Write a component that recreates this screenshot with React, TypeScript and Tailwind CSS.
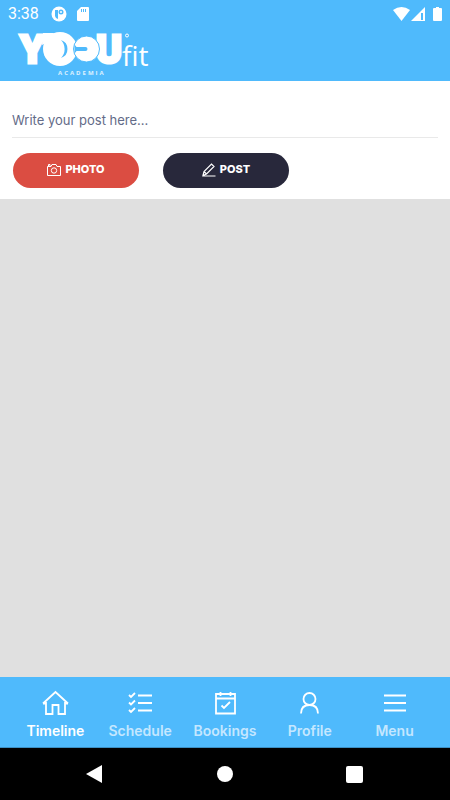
import { ReactNode, useState } from "react";
import clsx from "clsx";

const Logo = () => (
  <svg
    viewBox="0 0 140 54"
    className="ml-3 h-[54px] w-[140px] overflow-visible"
    fill="white"
    role="img"
    aria-label="Yoou fit academia"
  >
    <g
      fontFamily="Roboto, sans-serif"
      fontWeight="900"
      fontSize="39"
      stroke="white"
      strokeWidth="3"
    >
      <text x="8" y="36">
        Y
      </text>
      <text x="84" y="36">
        U
      </text>
    </g>
    <path d="M31 6h11l-4 8l-8 4z" />
    <circle cx="48" cy="22" r="17" />
    <path d="M49 13A9.500 9.500 0 0 1 49 31A13 13 0 0 0 49 13z" fill="#4fbafc" />
    <circle cx="74.500" cy="22" r="13" stroke="#4fbafc" strokeWidth="1" />
    <path d="M64.500 20h9a2 2 0 0 1 0 4h-9l-2 2.500v-9z" fill="#4fbafc" />
    <circle cx="115" cy="8.500" r="1.500" fill="none" stroke="white" strokeWidth="1" />
    <text x="110" y="39" fontSize="28" fontFamily="Open Sans, sans-serif">
      fit
    </text>
    <text
      x="46"
      y="48"
      fontSize="6"
      fontWeight="700"
      fontFamily="Open Sans, sans-serif"
      className="tracking-[2px]"
      opacity="0.8"
    >
      ACADEMIA
    </text>
  </svg>
);

const StatusBar = () => (
  <div className="flex h-[27px] items-center px-2 text-white">
    <span className="font-[Roboto] text-base leading-5">3:38</span>
    <svg viewBox="0 0 16 16" className="ml-3 size-4">
      <circle cx="8" cy="8" r="7.500" fill="white" />
      <path d="M4 4h3v9l-2 -1l-1 -2z" fill="#4fbafc" />
      <circle cx="10" cy="6" r="2.500" fill="#4fbafc" />
      <circle cx="10" cy="6" r="1" fill="white" />
    </svg>
    <svg viewBox="0 0 12 14" className="ml-2.5 h-[14px] w-3" fill="white">
      <path
        fillRule="evenodd"
        d="M4 0h7q1 0 1 1v12q0 1 -1 1H1q-1 0 -1 -1V4zM4 2v3h1V2zM6 2v3h1V2zM8 2v3h1V2z"
      />
    </svg>
    <div className="ml-auto flex items-center">
      <svg viewBox="0 0 17 14" className="h-[14px] w-[17px]" fill="white">
        <path d="M0 3Q8.500 -3 17 3L8.500 14z" />
      </svg>
      <svg viewBox="0 0 14 14" className="ml-px h-[14px] w-[14px]">
        <path d="M14 0v14H0z" fill="white" />
        <path d="M10 6h2v7h-2z" fill="#4fbafc" />
      </svg>
      <svg viewBox="0 0 9 14" className="ml-2 h-[14px] w-[9px]" fill="white">
        <path d="M3 0h3v1h2q1 0 1 1v11q0 1 -1 1H1q-1 0 -1 -1V2q0 -1 1 -1h2z" />
      </svg>
    </div>
  </div>
);

const PostForm = () => {
  const [post, setPost] = useState("");
  return (
    <form
      onSubmit={(e) => e.preventDefault()}
      className="bg-white px-3 pb-[11px] pt-7"
    >
      <textarea
        value={post}
        onChange={(e) => setPost(e.target.value)}
        aria-label="Write your post here"
        placeholder="Write your post here..."
        rows={1}
        className="block h-[29px] w-full resize-none border-b border-[#e9e9e9] text-[13px] leading-[22px] text-[#525b7d] outline-none placeholder:text-[#636b88]"
      />
      <div className="ml-px mt-[15px] flex gap-6">
        <button
          type="button"
          className="flex h-[35px] w-[126px] items-center justify-center gap-1 rounded-full bg-[#db4d42] pb-0.5 text-[11px] font-extrabold text-white"
        >
          <svg
            viewBox="0 0 14 14"
            className="size-[14px]"
            fill="none"
            stroke="currentColor"
          >
            <path d="M.5 3.500h3.500l1 -2h4l1 2h3.500v9H.5zM1.500 3V1.500h1.500V3" />
            <circle cx="7" cy="7.500" r="2.700" />
          </svg>
          PHOTO
        </button>
        <button
          type="submit"
          className="flex h-[35px] w-[126px] items-center justify-center gap-1 rounded-full bg-[#28283b] pb-0.5 text-[11px] font-extrabold text-white"
        >
          <svg
            viewBox="0 0 14 14"
            className="size-[14px]"
            fill="none"
            stroke="currentColor"
            strokeWidth="1.200"
          >
            <path d="M1 12.500l1 -4L9.500 1l2.500 2.500L4.500 11zM2.500 9l2 2M1 13h12.500" />
          </svg>
          POST
        </button>
      </div>
    </form>
  );
};

const tabs: { name: string; icon: ReactNode }[] = [
  {
    name: "Timeline",
    icon: (
      <path d="M1 14.500L13.500 3L26 14.500M4 13v12h6.500v-9h6v9H23V13M1 14.500h3M23 14.500h3" />
    ),
  },
  {
    name: "Schedule",
    icon: (
      <path d="M11 6.500h14M11 14h14M11 21.500h14M2 6l2 2l4 -4M2 13.500l2 2l4 -4M2 21l2 2l4 -4" />
    ),
  },
  {
    name: "Bookings",
    icon: (
      <path d="M4 5h19v19.500H4zM4 9.500h19M8.500 3v4M18.500 3v4M9.500 16.500l2.500 2.500l6 -6" />
    ),
  },
  {
    name: "Profile",
    icon: (
      <>
        <circle cx="12.500" cy="10" r="6" />
        <path d="M4 24.500q0 -8.500 8.500 -8.500q8.500 0 8.500 8.500" />
      </>
    ),
  },
  { name: "Menu", icon: <path d="M2 6.500h22M2 14h22M2 21.500h22" /> },
];

const TabBar = () => {
  const [active, setActive] = useState("Timeline");
  return (
    <nav className="grid h-[71px] grid-cols-5 border-b border-[#3b8fc4] bg-[#4fbafc] px-[13px]">
      {tabs.map(({ name, icon }) => (
        <button
          key={name}
          type="button"
          onClick={() => setActive(name)}
          className="flex flex-col items-center pt-3 text-white"
        >
          <svg
            viewBox="0 0 26 26"
            className="size-[26px] overflow-visible"
            fill="none"
            stroke="currentColor"
            strokeWidth="1.800"
          >
            {icon}
          </svg>
          <span
            className={clsx(
              "mt-1 text-sm leading-6 font-semibold",
              active === name ? "text-white" : "text-[#c4e7ff]"
            )}
          >
            {name}
          </span>
        </button>
      ))}
    </nav>
  );
};

const SystemBar = () => (
  <div className="flex h-[52px] items-center justify-between bg-black px-[85px]">
    <button type="button" aria-label="Back">
      <svg viewBox="0 0 18 18" className="size-[18px]" fill="white">
        <path d="M17 0v18L1 9z" />
      </svg>
    </button>
    <button
      type="button"
      aria-label="Home"
      className="size-4 rounded-full bg-white"
    />
    <button
      type="button"
      aria-label="Recent apps"
      className="mr-0.5 size-[17px] rounded-xs bg-white"
    />
  </div>
);

const App = () => {
  return (
    <div className="flex min-h-screen flex-col bg-[#e0e0e0] font-[Inter,sans-serif]">
      <header className="bg-[#4fbafc]">
        <StatusBar />
        <Logo />
      </header>
      <main className="flex-1">
        <PostForm />
      </main>
      <TabBar />
      <SystemBar />
    </div>
  );
};

export default App;
